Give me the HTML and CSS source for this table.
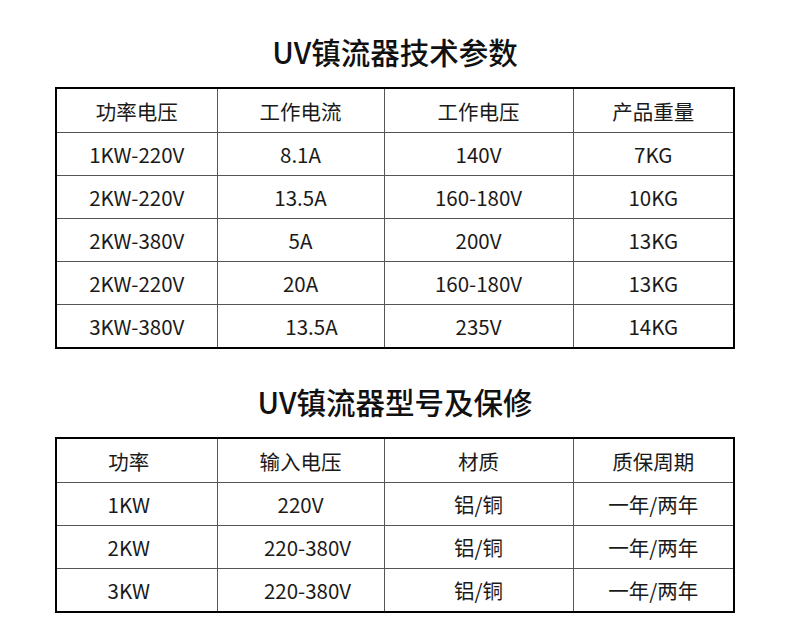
FILE: index.html
```html
<!DOCTYPE html>
<html lang="zh-CN">
<head>
<meta charset="utf-8">
<title>UV镇流器</title>
<link rel="stylesheet" href="styles.css">
</head>
<body>
<div class="page">
  <section class="sec sec-first">
    <h2 class="title">UV镇流器技术参数</h2>
    <table class="spec">
      <colgroup><col class="c1"><col class="c2"><col class="c3"><col class="c4"></colgroup>
      <thead>
        <tr><th>功率电压</th><th>工作电流</th><th>工作电压</th><th>产品重量</th></tr>
      </thead>
      <tbody>
        <tr><td>1KW-220V</td><td>8.1A</td><td>140V</td><td>7KG</td></tr>
        <tr><td>2KW-220V</td><td>13.5A</td><td>160-180V</td><td>10KG</td></tr>
        <tr><td>2KW-380V</td><td>5A</td><td>200V</td><td>13KG</td></tr>
        <tr><td>2KW-220V</td><td>20A</td><td>160-180V</td><td>13KG</td></tr>
        <tr><td>3KW-380V</td><td class="sh-r">13.5A</td><td>235V</td><td>14KG</td></tr>
      </tbody>
    </table>
  </section>
  <section class="sec">
    <h2 class="title">UV镇流器型号及保修</h2>
    <table class="spec">
      <colgroup><col class="c1"><col class="c2"><col class="c3"><col class="c4"></colgroup>
      <thead>
        <tr><th class="sh-l">功率</th><th>输入电压</th><th>材质</th><th>质保周期</th></tr>
      </thead>
      <tbody>
        <tr><td class="sh-l">1KW</td><td>220V</td><td>铝/铜</td><td>一年/两年</td></tr>
        <tr><td class="sh-l">2KW</td><td class="sh-r2">220-380V</td><td>铝/铜</td><td>一年/两年</td></tr>
        <tr><td class="sh-l">3KW</td><td class="sh-r2">220-380V</td><td>铝/铜</td><td>一年/两年</td></tr>
      </tbody>
    </table>
  </section>
</div>
</body>
</html>
```
FILE: styles.css
```css
html, body {
  margin: 0;
  padding: 0;
  background: #ffffff;
}
body {
  font-family: "Noto Sans CJK SC", "Noto Sans", sans-serif;
  color: #1a1a1a;
}
.page {
  width: 790px;
  display: flex;
  flex-direction: column;
  align-items: center;
}
.sec {
  display: flex;
  flex-direction: column;
  align-items: center;
  margin-top: 29px;
}
.sec-first {
  margin-top: 28px;
}
.title {
  margin: 0 0 13px 0;
  font-size: 29.5px;
  line-height: 46px;
  height: 46px;
  font-weight: 500;
  letter-spacing: 0;
  color: #111;
}
.spec {
  border-collapse: collapse;
  border: 2px solid #000;
  width: 678px;
  table-layout: fixed;
}
.c1 { width: 161px; }
.c2 { width: 167px; }
.c3 { width: 189px; }
.c4 { width: 161px; }
.spec th, .spec td {
  border: 1px solid #555;
  padding: 0;
  text-align: center;
  font-size: 20.5px;
  font-weight: 400;
  color: #1a1a1a;
}
.spec th {
  height: 43px;
}
.spec td {
  height: 42px;
}
.sh-l { padding-right: 16px !important; }
.sh-r { padding-left: 22px !important; }
.sh-r2 { padding-left: 14px !important; }
```
